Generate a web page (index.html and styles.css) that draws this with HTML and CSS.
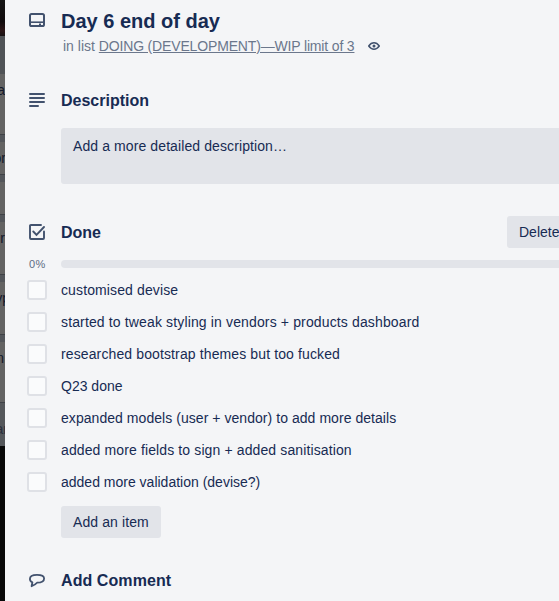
FILE: index.html
```
<!DOCTYPE html>
<html lang="en">
<head>
<meta charset="utf-8">
<title>Day 6 end of day</title>
<link rel="stylesheet" href="styles.css">
</head>
<body>
<div class="app">
  <aside class="board">
    <div class="board-top"></div>
    <div class="list-head"></div>
    <div class="card tall"><span class="t1">a</span></div>
    <div class="card short"><span class="t2">or</span></div>
    <div class="card short"></div>
    <div class="card medium"><span class="t3">r</span></div>
    <div class="card medium"><span class="t4">yp</span></div>
    <div class="card tall last"><span class="t5">n</span></div>
    <div class="list-foot"><span class="t6">ar</span></div>
  </aside>
  <main class="dialog">
    <header class="title-row">
      <svg class="icon" viewBox="0 0 16 16"><g fill="none" stroke="currentColor" stroke-width="2"><rect x="1" y="2" width="14" height="12" rx="1.6"/><path d="M1 10.200H15" stroke-width="1.600"/></g><path d="M10 11.400h2v1.600h-2z" fill="currentColor"/></svg>
      <div>
        <h1>Day 6 end of day</h1>
        <p class="in-list"><span>in list <a>DOING (DEVELOPMENT)—WIP limit of 3</a></span>
          <svg class="eye" viewBox="0 0 12 8"><path d="M.7 4C2.200 1.900 4 .8 6 .8S9.800 1.900 11.300 4C9.800 6.100 8 7.200 6 7.200S2.200 6.100.7 4Z" fill="none" stroke="currentColor" stroke-width="1.400"/><circle cx="6" cy="4" r="1.500" fill="currentColor"/></svg>
        </p>
      </div>
    </header>

    <section class="description">
      <div class="heading">
        <svg class="icon" viewBox="0 0 16 16"><path d="M1 2H15M1 6H15M1 10H15M1 14H9" fill="none" stroke="currentColor" stroke-width="2" stroke-linecap="round"/></svg>
        <h2>Description</h2>
      </div>
      <div class="field">Add a more detailed description…</div>
    </section>

    <section class="checklist">
      <div class="heading">
        <svg class="icon" viewBox="0 0 16 16"><path d="M12 1H2Q1 1 1 2V14Q1 15 2 15H14Q15 15 15 14V7.500" fill="none" stroke="currentColor" stroke-width="1.900" stroke-linecap="round"/><path d="M4.300 7.500 7.500 10.800 15 3" fill="none" stroke="currentColor" stroke-width="1.900" stroke-linecap="round"/></svg>
        <h2>Done</h2>
        <button class="button delete">Delete…</button>
      </div>
      <div class="progress"><span class="percent">0%</span><div class="bar"></div></div>
      <ul>
        <li><i class="box"></i><span class="loose">customised devise</span></li>
        <li><i class="box"></i><span class="looser">started to tweak styling in vendors + products dashboard</span></li>
        <li><i class="box"></i><span class="loose">researched bootstrap themes but too fucked</span></li>
        <li><i class="box"></i><span>Q23 done</span></li>
        <li><i class="box"></i><span class="slight">expanded models (user + vendor) to add more details</span></li>
        <li><i class="box"></i><span class="loose">added more fields to sign + added sanitisation</span></li>
        <li><i class="box"></i><span>added more validation (devise?)</span></li>
      </ul>
      <button class="button add">Add an item</button>
    </section>

    <section class="comment heading">
      <svg class="icon" viewBox="0 0 16 16"><path d="M2.600 14.200 3.400 10.300C1.800 9.600.9 8.500.9 6.900.9 4.100 4 2.900 8 2.900 12.300 2.900 15.100 4 15.100 6.400 15.100 9.200 12 10.600 8 10.700 6.600 12.400 4.900 13.400 2.600 14.200Z" fill="none" stroke="currentColor" stroke-width="1.800" stroke-linejoin="round"/></svg>
      <h2>Add Comment</h2>
    </section>
  </main>
</div>
</body>
</html>
```
FILE: styles.css
```
* { box-sizing: border-box; }
body { margin: 0; font: 14px/20px "Liberation Sans", Arial, sans-serif; color: #172b53; overflow: hidden; }
h1, h2, p, ul { margin: 0; padding: 0; }
h1, h2, li > span, .in-list { white-space: nowrap; }
.app { display: flex; width: 559px; height: 601px; overflow: hidden; background: #f4f5f7; }

.board { flex: 0 0 5px; overflow: hidden; background: #080808; color: #12182a; }
.board-top { height: 36px; background: linear-gradient(#151515, #100b0d 60%, #2b1517 85%, #171214); }
.list-head { height: 38px; background: #505357; }
.card { display: flex; justify-content: flex-end; overflow: hidden; padding-top: 6px; background: #636363; border-bottom: 1px solid #3f4247; box-shadow: 0 7px #53565b; margin-bottom: 7px; }
.tall { height: 61px; }
.short { height: 33px; }
.medium { height: 53px; }
.last { margin-bottom: 0; box-shadow: none; }
.list-foot { display: flex; justify-content: flex-end; height: 43px; padding-top: 16px; background: #54575b; color: #292e3b; }
.t2 { margin-right: -1px; }
.t4 { margin-right: -5px; }
.t5 { margin-right: 1px; }
.t6 { margin-right: -3px; }

.dialog { flex: none; width: 600px; padding-left: 24px; }
.icon { flex: none; width: 16px; height: 16px; margin-right: 16px; color: #42526e; }
.title-row { display: flex; height: 88px; padding-top: 9px; }
.title-row .icon { margin-top: 3px; }
h1 { font-size: 20px; line-height: 24px; }
.in-list { display: flex; align-items: center; gap: 14px; height: 20px; margin: 3px 0 0 2px; color: #6b778c; }
.in-list a { text-decoration: underline; letter-spacing: -0.16px; }
.eye { width: 12px; height: 8px; color: #42526e; }

.heading { display: flex; align-items: center; }
h2 { padding-top: 2px; font-size: 16px; line-height: 24px; }
.description { height: 128px; }
.description .heading { height: 24px; }
.field { height: 56px; margin: 16px 0 0 32px; padding: 8px 12px; background: #e2e4e9; border-radius: 3px; letter-spacing: 0.1px; }

.checklist .heading { height: 32px; }
.button { height: 32px; padding: 0 12px; border: 0; border-radius: 3px; background: #e2e4e9; color: #172b53; font: inherit; text-align: left; white-space: nowrap; }
.delete { margin-left: auto; margin-right: 22px; width: 76px; }
.progress { display: flex; align-items: center; height: 32px; }
.percent { width: 32px; font-size: 11px; line-height: 10px; letter-spacing: 0.4px; color: #5e6c84; }
.bar { flex: 1; height: 8px; border-radius: 4px; background: #e2e4e9; }
ul { list-style: none; margin-top: -6px; }
li { display: flex; align-items: center; height: 32px; }
.slight { letter-spacing: 0.05px; }
.loose { letter-spacing: 0.12px; }
.looser { letter-spacing: 0.14px; }
.box { width: 20px; height: 20px; margin: 0 14px 0 -2px; border: 2px solid #dfe1e6; border-radius: 3px; background: #fafbfc; }
.add { display: block; width: 100px; margin: 8px 0 0 32px; letter-spacing: 0.1px; }
.comment { height: 24px; margin-top: 30px; }
.comment h2 { letter-spacing: 0.08px; }
```
